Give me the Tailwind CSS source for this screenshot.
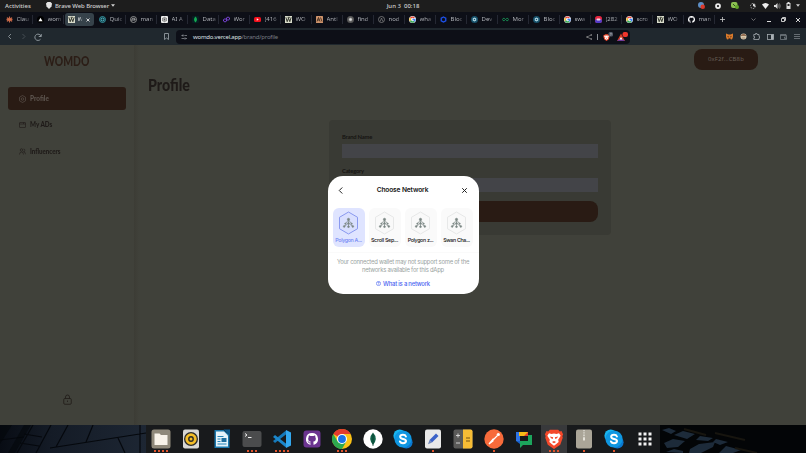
<!DOCTYPE html>
<html lang="en">
  <head>
    <meta charset="UTF-8" />
    <meta name="viewport" content="width=device-width, initial-scale=1.0" />
    <title>Womdo - Profile</title>
    <script src="https://cdn.jsdelivr.net/npm/@tailwindcss/browser@4"></script>
  </head>
  <body class="w-[806px] h-[453px] overflow-hidden bg-[#40413a] font-['Noto_Sans',sans-serif]">
    <!-- Shared icons -->
    <svg class="hidden">
      <symbol id="chrome" viewBox="0 0 24 24">
        <circle cx="12" cy="12" r="12" fill="#fbc116" />
        <path d="M12 12 1.600 6A12 12 0 0 1 22.400 6H12z" fill="#e33b2e" />
        <path d="M1.600 6A12 12 0 0 0 12 24l5.200-9L12 12 6.800 15z" fill="#2da94f" />
        <circle cx="12" cy="12" r="6" fill="#fff" />
        <circle cx="12" cy="12" r="4.700" fill="#1a73e8" />
      </symbol>
      <symbol id="google" viewBox="0 0 24 24">
        <circle cx="12" cy="12" r="12" fill="#f4f4f4" />
        <g fill="none" stroke-width="5">
          <path d="M5 8A8 8 0 0 1 18 6.500" stroke="#ea4335" />
          <path d="M5 16A8 8 0 0 1 5 8" stroke="#fbbc05" />
          <path d="M18 18A8 8 0 0 1 5 16" stroke="#34a853" />
          <path d="M12 12h8a8 8 0 0 1-2 6" stroke="#4285f4" />
        </g>
      </symbol>
      <symbol id="github" viewBox="0 0 16 16">
        <path d="M8 0a8 8 0 0 0-2.530 15.590c.4.070.550-.170.550-.380v-1.490c-2.230.480-2.700-.950-2.700-.950-.360-.920-.890-1.170-.890-1.170-.730-.500.050-.490.050-.490.800.060 1.230.830 1.230.830.720 1.220 1.870.870 2.330.660.070-.520.280-.870.510-1.070-1.780-.200-3.640-.890-3.640-3.950 0-.870.310-1.590.820-2.150-.080-.200-.360-1.020.080-2.120 0 0 .670-.220 2.200.820a7.600 7.600 0 0 1 4 0c1.530-1.040 2.200-.820 2.200-.820.440 1.100.160 1.920.080 2.120.510.560.820 1.270.820 2.150 0 3.070-1.870 3.750-3.650 3.950.290.250.540.730.540 1.480v2.200c0 .210.150.460.550.380A8 8 0 0 0 8 0z" />
      </symbol>
      <symbol id="womdo" viewBox="0 0 16 16">
        <rect width="16" height="16" fill="#d9dccb" />
        <path d="M2 3l3 10 3-8 3 8 3-10M6 3h5" fill="none" stroke="#20241c" stroke-width="2" />
      </symbol>
      <symbol id="chainlink" viewBox="0 0 16 16">
        <circle cx="8" cy="8" r="8" fill="#16516b" />
        <path d="M8 3.500l4 2.200v4.600l-4 2.200-4-2.200V5.700z" fill="#b8dbe6" />
        <circle cx="8" cy="8" r="1.800" fill="#16516b" />
      </symbol>
      <symbol id="brave" viewBox="0 0 24 24">
        <path d="M7 1h10l2 2 2-.5 2 4-1 2 .5 2-3 8.500L12 24l-7.500-5-3-8.500.5-2-1-2 2-4L5 3z" fill="#f4482a" />
        <path d="M6 5l3 1 3-.7L15 6l3-1 2 3-3 5 .6 2.500-3.600 3L12 20l-2-1.500-3.600-3L7 13 4 8z" fill="#fff" />
        <path d="M7 9l4 1-.5 2-2-1zM17 9l-4 1 .5 2 2-1zM9.500 15.500l2.500-1 2.500 1-2.500 1.500z" fill="#f4482a" />
      </symbol>
      <symbol id="skype" viewBox="0 0 24 24">
        <circle cx="8" cy="8" r="7.500" fill="#18b5f0" />
        <circle cx="16" cy="16" r="7.500" fill="#0a78d1" />
        <circle cx="12" cy="12" r="10.300" fill="#0f97e2" />
        <path d="M15.500 9C15 7.600 13.600 7 12 7c-2 0-3.400.8-3.400 2.300 0 3.500 7 1.800 7 5.200 0 1.700-1.600 2.500-3.600 2.500-1.800 0-3-.6-3.700-2" fill="none" stroke="#fff" stroke-width="2.400" stroke-linecap="round" />
      </symbol>
      <symbol id="network" viewBox="0 0 24 28">
        <path d="M12 1.200 22.500 7.300v13.400L12 26.800 1.500 20.700V7.300z" fill="currentColor" fill-opacity=".06" stroke="currentColor" stroke-width="1.100" stroke-linejoin="round" />
        <g fill="#7b8784" stroke="#7b8784" stroke-width=".8">
          <circle cx="12" cy="9.800" r="1.300" />
          <circle cx="12" cy="14.300" r="1" />
          <circle cx="8.400" cy="14.800" r=".8" />
          <circle cx="15.600" cy="14.800" r=".8" />
          <circle cx="7" cy="18" r="1" />
          <circle cx="12" cy="18.300" r="1" />
          <circle cx="17" cy="18" r="1" />
          <path d="M12 10v8M12 10.500l-3.600 4.300M12 10.500l3.600 4.300M12 14.300 7 18M12 14.300l5 3.700" fill="none" />
        </g>
      </symbol>
    </svg>

    <div class="flex flex-col h-[453px]">
      <!-- System bar -->
      <header class="h-[11.500px] shrink-0 flex items-center bg-[#1d1d1d] text-[#d0d0d0] text-[6px] font-medium leading-none whitespace-nowrap">
        <div class="w-[270px] flex items-center pl-[5px]">
          <span class="w-[41px]">Activities</span>
          <svg class="w-[6px] h-[7px]" viewBox="0 0 12 14"><path d="M3 0h6l3 3-1 6-5 5-5-5-1-6z" fill="#e4e4e4" /></svg>
          <span class="ml-[3px] tracking-[-.1px]">Brave Web Browser</span>
          <svg class="ml-[2px] w-[4px] h-[3px]" viewBox="0 0 8 5"><path d="M0 0h8L4 5z" fill="#d0d0d0" /></svg>
        </div>
        <div class="w-[266px] text-center whitespace-pre">Jun 3  00:18</div>
        <div class="flex-1 flex items-center justify-end pr-[6px]">
          <svg class="w-[7px] h-[7px] mr-[10px]" viewBox="0 0 14 14"><circle cx="6" cy="6" r="6" fill="#5d8fc6" /><circle cx="9.500" cy="9.500" r="4.500" fill="#d9392c" /></svg>
          <svg class="w-[6px] h-[6px] mr-[10px]" viewBox="0 0 12 12"><circle cx="6" cy="6" r="4" fill="none" stroke="#eee" stroke-width="3.500" /></svg>
          <svg class="w-[8px] h-[7px] mr-[11px]" viewBox="0 0 16 14"><rect width="13" height="12" rx="4" fill="#8cc152" /><path d="M4 4l5 5" stroke="#314f19" stroke-width="2" /><circle cx="12" cy="10" r="4" fill="#62a42b" /></svg>
          <svg class="w-[6px] h-[6px] mr-[6px]" viewBox="0 0 12 12"><circle cx="6" cy="6" r="5" fill="none" stroke="#d0d0d0" stroke-width="1.500" stroke-dasharray="3 2" /><path d="M6 1v5l4 2A5 5 0 0 0 6 1z" fill="#ddd" /></svg>
          <svg class="w-[7px] h-[6px] mr-[5px]" viewBox="0 0 14 12"><path d="M0 3Q7-3 14 3L7 12z" fill="#eee" /></svg>
          <svg class="w-[7px] h-[6px] mr-[5px]" viewBox="0 0 14 12"><path d="M0 4h3l4-4v12L3 8H0z" fill="#ddd" /><path d="M9 3q2 3 0 6M11 1q3 5 0 10" fill="none" stroke="#aaa" stroke-width="1.200" /></svg>
          <svg class="w-[5px] h-[7px] mr-[5px]" viewBox="0 0 10 14"><path d="M3 0h4v2h2v12H1V2h2z" fill="#ddd" /><path d="M3 4h4v4H3z" fill="#222" /></svg>
          <svg class="w-[4px] h-[3px]" viewBox="0 0 8 5"><path d="M0 0h8L4 5z" fill="#d0d0d0" /></svg>
        </div>
      </header>

      <!-- Tab strip -->
      <nav class="h-[16.500px] shrink-0 flex items-center bg-[#0d0f17] pl-[1.500px] text-[6px] leading-[9px] text-[#b2b5ba] whitespace-nowrap">
        <div id="tabs" class="flex items-center shrink-0"></div>
        <div class="flex-1 flex items-center justify-between pl-[5px] pr-[6px]">
          <svg class="w-[5px] h-[5px]" viewBox="0 0 10 10"><path d="M5 0v10M0 5h10" stroke="#ccc" stroke-width="1.600" /></svg>
          <div class="flex items-center gap-[10px]">
            <svg class="w-[5px] h-[3px] mr-px" viewBox="0 0 10 6"><path d="M1 1l4 4 4-4" fill="none" stroke="#777" stroke-width="1.800" /></svg>
            <svg class="w-[4px] h-[5px]" viewBox="0 0 8 10"><path d="M0 9h8" stroke="#ddd" stroke-width="2" /></svg>
            <svg class="w-[5px] h-[5px]" viewBox="0 0 10 10"><path d="M3 3V1h6v6H7M1 3h6v6H1z" fill="none" stroke="#ddd" stroke-width="1.800" /></svg>
            <svg class="w-[4px] h-[4px]" viewBox="0 0 8 8"><path d="M0 0l8 8M8 0L0 8" stroke="#eee" stroke-width="1.800" /></svg>
          </div>
        </div>
      </nav>

      <!-- Address bar -->
      <div class="h-[17px] shrink-0 flex items-center bg-[#20282e]">
        <div class="w-[176px] flex items-center pl-[7px]">
          <svg class="w-[5px] h-[7px]" viewBox="0 0 10 14"><path d="M8 2L3 7l5 5" fill="none" stroke="#8c949a" stroke-width="1.800" /></svg>
          <svg class="ml-[9px] w-[5px] h-[7px]" viewBox="0 0 10 14"><path d="M3 2l5 5-5 5" fill="none" stroke="#4b5359" stroke-width="1.800" /></svg>
          <svg class="ml-[8px] w-[8px] h-[8px]" viewBox="0 0 16 16"><path d="M13 12.500A6.300 6.300 0 1 1 14 6.500M14.500 2v5h-5" fill="none" stroke="#99a1a7" stroke-width="1.800" /></svg>
          <svg class="ml-auto mr-[7px] w-[5px] h-[7px]" viewBox="0 0 10 14"><path d="M1 1h8v12l-4-3-4 3z" fill="none" stroke="#98a0a6" stroke-width="1.700" /></svg>
        </div>
        <div class="w-[454px] h-[14px] flex items-center rounded-[4px] bg-[#0d0f17] pl-[5px] pr-px text-[6px] leading-none">
          <svg class="w-[6px] h-[6px]" viewBox="0 0 12 12"><path d="M1 3h3M7 3h5M1 9h5M9 9h3" stroke="#8d9298" stroke-width="1.500" /><circle cx="4" cy="3" r="1.500" fill="none" stroke="#8d9298" stroke-width="1.300" /><circle cx="8" cy="9" r="1.500" fill="none" stroke="#8d9298" stroke-width="1.300" /></svg>
          <div class="ml-[6px] text-[#777b82] tracking-[-.21px]"><span class="text-[#dfe1e4]">womdo.vercel.app</span>/brand/profile</div>
          <svg class="ml-auto w-[6px] h-[6px]" viewBox="0 0 12 12"><path d="M11 1.500L2 6l9 4.500" fill="none" stroke="#999" stroke-width="1.300" /><g fill="#999"><circle cx="10.500" cy="2" r="1.500" /><circle cx="2" cy="6" r="1.500" /><circle cx="10.500" cy="10" r="1.500" /></g></svg>
          <div class="mx-[5px] w-px h-[6px] bg-[#8a8e94]"></div>
          <svg class="w-[11px] h-[10px]" viewBox="0 0 22 20"><svg y="3" width="14" height="16"><use href="#brave" /></svg><rect x="11" width="9" height="9" rx="3" fill="#555b69" /><path d="M14 3h3l-2 4" fill="none" stroke="#bbb" /></svg>
          <svg class="ml-[3px] w-[12px] h-[10px]" viewBox="0 0 24 20"><path d="M8 3l8 15H0z" fill="#d13c25" /><path d="M8 12l8 6H0z" fill="#6d3a9d" /><path d="M8 10l3 5H5z" fill="#fff" /><rect x="11" width="11" height="10" rx="4" fill="#f0362c" /></svg>
        </div>
        <div class="flex-1 flex items-center justify-between pl-[96px] pr-[6px]">
          <svg class="w-[7px] h-[7px]" viewBox="0 0 14 14"><path d="M0 1l5 2h4l5-2v7l-2 5-4-1H6l-4 1-2-5z" fill="#d97a2b" /><path d="M3 7l3 1M11 7L8 8M5 11h4" stroke="#4d2a13" stroke-width="1.500" /></svg>
          <svg class="w-[7px] h-[7px]" viewBox="0 0 14 14"><circle cx="7" cy="7" r="6" fill="#d8c9ad" /><path d="M2 5q5-5 10 0zM4 10h6" fill="#8c5a3c" stroke="#7a5239" /></svg>
          <svg class="w-[7px] h-[7px]" viewBox="0 0 14 14"><path d="M1.500 3h3.500V1h3v2h4v4h1v3h-1v3h-10.500v-3h1.500V7H1.500z" fill="none" stroke="#a9b0b5" stroke-width="1.500" /></svg>
          <svg class="w-[7px] h-[6px]" viewBox="0 0 14 12"><rect x="1" y="1" width="12" height="10" fill="none" stroke="#a9b0b5" stroke-width="1.500" /><path d="M8 1h5v10H8z" fill="#a9b0b5" /></svg>
          <svg class="w-[7px] h-[6px]" viewBox="0 0 14 12"><path d="M12 3V1H1v10h12V3H1M13 6H9v3h4" fill="none" stroke="#7f878d" stroke-width="1.400" /></svg>
          <svg class="w-[6px] h-[5px]" viewBox="0 0 12 10"><path d="M0 1h12M0 5h12M0 9h12" stroke="#8b9298" stroke-width="1.300" /></svg>
        </div>
      </div>

      <!-- Page -->
      <div class="relative h-[380px] shrink-0 flex bg-[#40413a] font-[Lato,sans-serif] text-[#1e1a18]">
        <aside class="w-[134px] shrink-0 flex flex-col items-center pt-[8px] pb-[20px] text-[7.500px] font-black">
          <h1 class="text-[14px] leading-[16px] font-black text-[#2b1d16] scale-x-[.74]">WOMDO</h1>
          <nav class="mt-[18px] w-full px-[8px] flex flex-col gap-[3.500px] leading-none">
            <a class="h-[23px] flex items-center gap-[4px] pl-[11px] rounded-[3px] bg-[#291b14] text-[#5d554f]">
              <svg class="w-[7px] h-[8px]" viewBox="0 0 14 16" fill="none" stroke="currentColor" stroke-width="1.300"><path d="M7 1l6 3.500v7L7 15l-6-3.500v-7z" /><circle cx="7" cy="8" r="2.500" /></svg>
              <span class="origin-left scale-x-[.85]">Profile</span>
            </a>
            <a class="h-[23px] flex items-center gap-[4px] pl-[11px]">
              <svg class="w-[7px] h-[6px]" viewBox="0 0 14 12" fill="none" stroke="currentColor" stroke-width="1.200"><rect x="1" y="1" width="12" height="10" rx="1" /><path d="M1 4h12M9 1v3" /></svg>
              <span class="origin-left scale-x-[.84]">My ADs</span>
            </a>
            <a class="h-[23px] flex items-center gap-[4px] pl-[11px]">
              <svg class="w-[7px] h-[7px]" viewBox="0 0 14 14" fill="none" stroke="currentColor" stroke-width="1.200"><circle cx="5" cy="4" r="2.500" /><path d="M1 13q0-5 4-5t4 5M9 2q3 0 2.500 3T9 7.500q4 0 4 5" /></svg>
              <span class="origin-left scale-x-[.82]">Influencers</span>
            </a>
          </nav>
          <svg class="mt-auto w-[9px] h-[11px]" viewBox="0 0 18 22" fill="none" stroke="#211c19" stroke-width="1.700"><rect x="1.500" y="9" width="15" height="11.500" rx="2" /><path d="M5 9V6a4 4 0 0 1 8 0v3M9 13v3" /></svg>
        </aside>
        <div class="w-[5px] shrink-0 bg-linear-to-r from-[#3c3c35] to-[#40413a]"></div>
        <main class="flex-1 flex flex-col">
          <div class="mt-[4px] mr-[48px] self-end w-[64px] h-[21px] rounded-[8px] bg-[#291b14] text-[#6a615b] text-[6px] leading-[20px] text-center font-['Open_Sans',sans-serif] tracking-[.1px]">0xF2f...CB8b</div>
          <h2 class="mt-[4px] pl-[9px] text-[16.500px] leading-[22px] font-black"><span class="inline-block origin-left scale-x-[.86]">Profile</span></h2>
          <form class="mt-[24px] ml-[190px] w-[282px] h-[115px] rounded-[4px] bg-[#393a34] px-[13px] pt-[12.500px] text-[5.800px] font-bold text-[#161412] tracking-[-.2px]">
            <label class="block leading-[8px]">Brand Name</label>
            <div class="mt-[3.500px] h-[14px] bg-[#434448]"></div>
            <label class="mt-[8.500px] block leading-[8px]">Category</label>
            <div class="mt-[3.500px] h-[14px] bg-[#434448]"></div>
            <div class="mt-[9px] h-[21px] rounded-[8px] bg-[#291b14]"></div>
          </form>
        </main>

        <!-- Network modal -->
        <section class="absolute left-[327.500px] top-[131px] w-[151px] h-[118px] rounded-[15px] bg-white font-[Inter,sans-serif] text-[#141414]">
          <div class="flex items-center justify-between pl-[10.500px] pr-[11.500px] pt-[8px] h-[20px] leading-none">
            <svg class="w-[5px] h-[7px]" viewBox="0 0 10 14"><path d="M8 1.500L2.500 7 8 12.500" fill="none" stroke="#202020" stroke-width="2" stroke-linecap="round" /></svg>
            <h3 class="text-[6.600px] font-semibold tracking-[-.12px]">Choose Network</h3>
            <svg class="w-[5px] h-[5px]" viewBox="0 0 10 10"><path d="M1 1l8 8M9 1L1 9" stroke="#202020" stroke-width="2" stroke-linecap="round" /></svg>
          </div>
          <div class="mt-[12px] flex justify-between pl-[5px] pr-[6px] text-[5.300px] font-medium leading-none text-center whitespace-nowrap tracking-[-.34px]">
            <div class="w-[32px] h-[39px] rounded-[6px] bg-[#dfe4ff] pt-[2.500px] flex flex-col items-center text-[#7184f4]">
              <svg class="w-[21px] h-[24px] text-[#8494ee]"><use href="#network" /></svg>
              <span class="mt-[3.500px]">Polygon A...</span>
            </div>
            <div class="w-[32px] h-[39px] rounded-[6px] bg-[#fafafa] pt-[2.500px] flex flex-col items-center">
              <svg class="w-[21px] h-[24px] text-[#e6e7e7]"><use href="#network" /></svg>
              <span class="mt-[3.500px] tracking-[-.25px]">Scroll Sep...</span>
            </div>
            <div class="w-[32px] h-[39px] rounded-[6px] bg-[#fafafa] pt-[2.500px] flex flex-col items-center">
              <svg class="w-[21px] h-[24px] text-[#e6e7e7]"><use href="#network" /></svg>
              <span class="mt-[3.500px]">Polygon z...</span>
            </div>
            <div class="w-[32px] h-[39px] rounded-[6px] bg-[#fafafa] pt-[2.500px] flex flex-col items-center">
              <svg class="w-[21px] h-[24px] text-[#e6e7e7]"><use href="#network" /></svg>
              <span class="mt-[3.500px]">Swan Cha...</span>
            </div>
          </div>
          <div class="mt-[5px] border-t border-[#fafafa] pt-[5px] text-center text-[5.900px] leading-[7.600px] tracking-[-.24px] text-[#9aa3a1] whitespace-nowrap">
            Your connected wallet may not support some of the<br />networks available for this dApp
          </div>
          <a class="mt-[6px] flex items-center justify-center gap-[2px] text-[5.900px] leading-[9px] font-medium tracking-[-.22px] text-[#4763f0]">
            <svg class="w-[5px] h-[5px]" viewBox="0 0 10 10" fill="none" stroke="currentColor" stroke-width="1.200"><circle cx="5" cy="5" r="4.200" /><path d="M3.700 4q0-1.500 1.400-1.500T6.400 4Q5 4.800 5 5.800M5 6.800v1" /></svg>What is a network
          </a>
        </section>
      </div>

      <!-- Dock over the wallpaper -->
      <footer class="relative h-[28px] shrink-0 bg-[#030507]">
        <svg class="absolute inset-0 w-full h-full" viewBox="0 0 806 28" preserveAspectRatio="none">
          <defs>
            <linearGradient id="street"><stop offset="0" stop-color="#080c14" /><stop offset=".35" stop-color="#141b26" /><stop offset="1" stop-color="#1d2633" /></linearGradient>
          </defs>
          <path d="M0 0h146v28H0z" fill="url(#street)" />
          <g stroke="#05080d" fill="none" stroke-width="1.200">
            <path d="M33 0L17 28M51 0L36 28M0 15l24-3M24 9l18 3M20 18l19 3M50 23l96-15M68 0l-12 22M93 0l-7 17M118 13l7 15M140 0v28" />
          </g>
          <path d="M0 0h12L0 19zM24 0h7L15 28H8z" fill="#04060a" opacity=".6" />
          <g fill="#1d2b3a">
            <path d="M662 5l7-2 7 3-5 3zM674 10l9-4 12 3-8 5zM664 18l9-4 12 2-7 6-11 1zM690 24l9-5 16-2-2 5-12 6h-12zM700 11l13 2-5 3-12-1zM716 14l12 3-8 3-7-3zM666 27l8-3 9 2v2zM726 21l15 4-8 3h-14z" />
          </g>
          <path d="M684 4l22 6M715 8l30 7M735 23l22 5" stroke="#17150f" stroke-width="2" />
        </svg>
        <div id="dock" class="relative ml-[146px] w-[514px] h-full flex bg-[#181a1c]"></div>
      </footer>
    </div>

    <script>
      const use = (id) => `<use href="#${id}" />`;

      // [label, icon on a 14x14 grid]
      const tabs = [
        ['Clau', '<g stroke="#d9714c" stroke-width="1.800"><path d="M7 1v12M1 7h12M3 2.500l8 9M11 2.500l-8 9M1.500 4.500l11 5M12.500 4.500l-11 5" /></g>'],
        ['wom', '<circle cx="7" cy="7" r="7" fill="#000" /><path d="M7 3.500l4 7H3z" fill="#fff" />'],
        ['W', use('womdo')],
        ['Quic', '<circle cx="7" cy="7" r="6" fill="#12323a" stroke="#379aa8" stroke-width="1.800" /><path d="M7 4l3 1.500v3L7 10 4 8.500v-3z" fill="none" stroke="#58c3d1" stroke-width="1.500" />'],
        ['man', '<circle cx="7" cy="7" r="6" fill="none" stroke="#aaa" stroke-width="1.600" /><path d="M4 10V6q3-3 6 0v2H6" fill="none" stroke="#ccc" stroke-width="1.600" />'],
        ['AI A', '<rect width="14" height="14" rx="2" fill="#eee" /><path d="M7 2.500l4 2.200v4.600l-4 2.200-4-2.200V4.700zM3 4.700l8 4.600M11 4.700L3 9.300M7 3v8" fill="none" stroke="#444" />'],
        ['Data', '<rect width="14" height="14" rx="2" fill="#071e22" /><path d="M7 1q6 6 0 12Q1 7 7 1z" fill="#13aa52" />'],
        ['Wor', '<path d="M4 5.500l3 1.700v3L4 12l-3-1.800v-3zM10 2l3 1.700v3L10 8.500 7 6.800v-3z" fill="none" stroke="#8247e5" stroke-width="1.800" />'],
        ['(416', '<rect y="2" width="14" height="10" rx="3" fill="#f3101c" /><path d="M5.500 4.500l4 2.500-4 2.500z" fill="#fff" />'],
        ['WO', use('womdo')],
        ['Antl', '<rect width="14" height="14" rx="1" fill="#cf946c" /><path d="M2 11l3-8 3 8M3 8h4M9 3l3 8" fill="none" stroke="#2b1b12" stroke-width="1.500" />'],
        ['find', '<circle cx="7" cy="7" r="5.500" fill="#888" stroke="#555" stroke-width="3" /><circle cx="7" cy="7" r="2.500" fill="#ddd" />'],
        ['nod', '<circle cx="7" cy="7" r="6" fill="none" stroke="#888" stroke-width="1.500" /><path d="M4.500 10.500L7 4l2.500 6.500" fill="none" stroke="#888" stroke-width="1.300" />'],
        ['wha', use('google')],
        ['Bloc', '<path d="M7 2l4.500 2.500v5L7 12 2.500 9.500v-5z" fill="none" stroke="#1d50e8" stroke-width="2.700" />'],
        ['Dev', use('chainlink')],
        ['Mor', '<path d="M7 7Q4 3 2 5t0 4 5-2 5-2 0 4-5-2" fill="none" stroke="#178d52" stroke-width="1.800" />'],
        ['Bloc', use('chainlink')],
        ['swa', use('google')],
        ['(282', '<rect width="14" height="14" rx="5" fill="#e3263f" /><rect y="6" width="14" height="8" rx="4" fill="#513bc8" /><rect x="3" y="5" width="8" height="4" rx="2" fill="#f6d9e3" />'],
        ['scro', use('google')],
        ['WO', use('womdo')],
        ['man', '<g fill="#fff"><use href="#github" /></g>'],
      ];

      document.getElementById('tabs').innerHTML = tabs.map(([label, icon], i) => i === 2
        ? `<div class="w-[29px] mx-px h-[13px] shrink-0 flex items-center rounded-[3px] bg-[#36424a] pl-[3px] text-white">
             <svg class="w-[7px] h-[7px] shrink-0" viewBox="0 0 14 14">${icon}</svg>
             <span class="ml-[3px] w-[6px] mask-r-from-20% mask-r-to-80%">${label}</span>
             <svg class="ml-[2px] w-[4px] h-[4px]" viewBox="0 0 8 8"><path d="M1 1l6 6M7 1L1 7" stroke="#e6e6e6" stroke-width="1.800" /></svg>
           </div>`
        : `<div class="w-[31px] h-[9px] shrink-0 flex items-center gap-[4px] pl-[4px] border-r border-[#252833]">
             <svg class="w-[7px] h-[7px] shrink-0" viewBox="0 0 14 14">${icon}</svg>
             <span class="bg-linear-to-r from-[#b9bcc1] from-65% to-[#4a4c53] bg-clip-text text-transparent">${label}</span>
           </div>`).join('');

      // [running windows, icon on a 20x20 grid]
      const apps = [
        [4, '<rect x="0.500" y="0.500" width="19" height="19" rx="2.500" fill="#8f897a" /><path d="M3.500 4.500h5l1.500 1.500h6.500v10h-13z" fill="#f8f3e9" />'],
        [0, '<rect x="2" y="0.500" width="16" height="19" rx="2" fill="#d8d7d4" /><circle cx="10" cy="10" r="7" fill="#292929" /><circle cx="10" cy="10" r="4.300" fill="none" stroke="#f3bd27" stroke-width="2.800" /><circle cx="10" cy="10" r="1.500" fill="#f3bd27" />'],
        [0, '<path d="M2.500 1h9l6 5v13h-15z" fill="#1c78ad" /><path d="M4 2.500h8l4 4v11H4z" fill="#e5f3fa" /><path d="M11.500.5H18v6z" fill="#0d5788" /><path d="M5.500 7.500h6M5.500 10h3M5.500 12.500h3M5.500 15h9" stroke="#2584b8" /><path d="M9.500 9h5v4h-5z" fill="#1d6e9f" />'],
        [3, '<rect x="0.500" y="2" width="19" height="16" rx="2" fill="#4b4c4d" /><path d="M3 4.500l2 1.500-2 1.500M6 8.500h3.500" fill="none" stroke="#eee" />'],
        [4, '<path d="M14.500 5L3 14l-2-2L14 1.500z" fill="#1679ba" /><path d="M14.500 15L3 6 1 8l13 10.500z" fill="#1b87cc" /><path d="M14 1l5 2.500v13L14 19z" fill="#33a8ef" />'],
        [0, '<rect x="1.500" y="1.500" width="17" height="17" rx="3" fill="#6b3490" /><svg x="4" y="4" width="12" height="12" fill="#fff"><use href="#github" /></svg>'],
        [3, use('chrome')],
        [0, '<circle cx="10" cy="10" r="9.700" fill="#fff" /><path d="M10 3.500q5.500 6 0 12.500Q4.500 9.500 10 3.500z" fill="#116149" /><path d="M10 5v12" stroke="#0a3b2d" stroke-width=".7" />'],
        [0, use('skype')],
        [1, '<rect x="2" y="0.500" width="16" height="19" rx="2" fill="#e9e9e9" /><path d="M13 4.500l2.500 2.500-6.500 6.500L6.500 11z" fill="#3c62c8" /><path d="M6.500 11L9 13.500l-4 1.700z" fill="#7188ba" />'],
        [0, '<rect x="0.500" y="0.500" width="19" height="19" rx="2" fill="#5a5a59" /><path d="M10 .5h7.500a2 2 0 0 1 2 2v15a2 2 0 0 1-2 2H10z" fill="#f7bd35" /><path d="M3 6.500h4M5 4.500v4M3 14h4" stroke="#ddd" stroke-width=".9" /><path d="M13 9h4M13 12h4" stroke="#775512" stroke-width="1.100" />'],
        [1, '<circle cx="10" cy="10" r="9.700" fill="#f76b3b" /><path d="M13.500 6.500L9 11M8.800 10.500L5 15l4-3z" fill="#fff" stroke="#fff" stroke-width="1.200" /><circle cx="14.300" cy="5.500" r="1.600" fill="#fff" />'],
        [0, '<path d="M2 3h4v9H2z" fill="#2d73e6" /><path d="M5 3h9v4H5z" fill="#f8bb16" /><path d="M14 3v4h-4z" fill="#e9402f" /><path d="M14 6h4v10H9l-3 3v-7h8z" fill="#1ca45c" /><path d="M2 12h4v3z" fill="#1862cc" />'],
        [3, use('brave')],
        [1, '<rect x="2" y="0.500" width="16" height="19" rx="2" fill="#aaa598" /><path d="M10 1v8" stroke="#e9e7df" stroke-width="1.200" stroke-dasharray="1 .7" /><rect x="9.200" y="8.500" width="1.600" height="3" rx=".5" fill="#f4f2ea" />'],
        [1, use('skype')],
        [0, '<path d="M3.500 5h13M3.500 10h13M3.500 15h13" stroke="#f2f2f2" stroke-width="3" stroke-dasharray="3 2" />'],
      ];

      document.getElementById('dock').innerHTML = apps.map(([windows, icon], i) => `
        <div class="${i === 13 ? 'w-[26px] mx-[2.110px] bg-[#38393b]' : 'w-[30.220px]'} shrink-0 flex flex-col items-center pt-[4px]">
          <svg class="w-[20px] h-[20px]" viewBox="0 0 20 20">${icon}</svg>
          <div class="mt-px flex gap-[2px]">${'<i class="size-[2px] bg-[#e0532c]"></i>'.repeat(windows)}</div>
        </div>`).join('');
    </script>
  </body>
</html>
